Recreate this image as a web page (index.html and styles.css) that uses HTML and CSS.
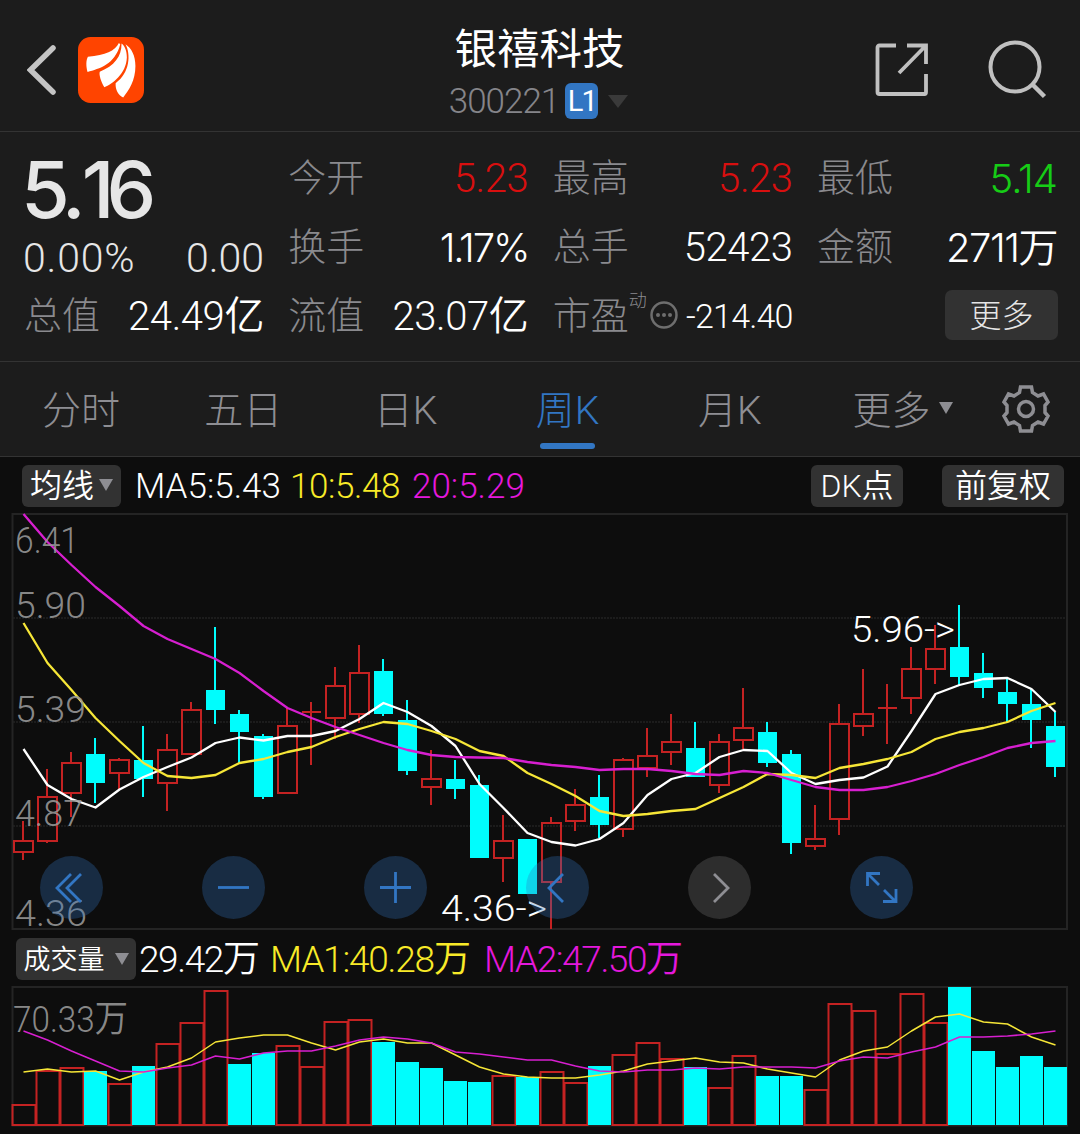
FILE: index.html
```html
<!DOCTYPE html>
<html lang="zh-CN">
<head>
    <meta charset="UTF-8">
    <meta name="viewport" content="width=device-width, initial-scale=1.0">
    <title>银禧科技 300221</title>
    <link rel="stylesheet" href="styles.css">
</head>
<body>
    <header class="header">
        <div class="header-left">
            <svg class="back" viewBox="0 0 30 50" width="30" height="50"><path d="M26 3 L3.5 25 L26 47"/></svg>
            <svg class="logo" viewBox="0 0 200 200" width="66" height="66">
                <rect width="200" height="200" rx="38"/>
                <path d="M124 18 C112 42 84 55 30 60 C24 70 24 90 29 106 C64 96 112 84 128 22 Z"/>
                <path d="M132 20 C132 60 110 88 66 105 C63 114 70 136 80 152 C104 142 146 112 148 62 C148 42 142 28 132 20 Z"/>
                <path d="M144 22 C160 52 158 108 114 140 C113 160 122 176 137 183 C154 162 174 132 174 88 C174 56 162 34 144 22 Z"/>
            </svg>
        </div>
        <div class="header-title">
            <h1 class="stock-name">银禧科技</h1>
            <div class="stock-code">
                <span class="code">300221</span>
                <span class="level">L1</span>
                <span class="caret caret-dark"></span>
            </div>
        </div>
        <div class="header-right">
            <svg viewBox="0 0 54 54" width="54" height="54">
                <path d="M21 2.5 H4.5 Q2.5 2.5 2.5 4.5 V49 Q2.5 51 4.5 51 H49.5 Q51 51 51 49 V31 M32 2.5 H51 V21 M50 3.5 L24 30"/>
            </svg>
            <svg viewBox="0 0 60 60" width="60" height="60">
                <circle cx="27" cy="27" r="24.5" stroke-width="4"/>
                <path d="M44 44 L56.5 56.5" stroke-width="4.5"/>
            </svg>
        </div>
    </header>

    <section class="quote">
        <div class="quote-col">
            <div class="price">5<span class="dot-gap">.</span>16</div>
            <div class="quote-row change"><span class="percent">0.00%</span><span>0.00</span></div>
            <div class="quote-row"><span class="label">总值</span><span class="value">24.49亿</span></div>
        </div>
        <div class="quote-col">
            <div class="quote-row"><span class="label">今开</span><span class="value red">5.23</span></div>
            <div class="quote-row"><span class="label">换手</span><span class="value narrow">1.17%</span></div>
            <div class="quote-row"><span class="label">流值</span><span class="value">23.07亿</span></div>
        </div>
        <div class="quote-col">
            <div class="quote-row"><span class="label">最高</span><span class="value red">5.23</span></div>
            <div class="quote-row"><span class="label">总手</span><span class="value">52423</span></div>
            <div class="quote-row">
                <span class="label">市盈<sup class="dynamic">动</sup></span>
                <svg class="info" viewBox="0 0 28 28" width="28" height="28">
                    <circle cx="14" cy="14" r="12.5"/>
                    <circle class="dot" cx="8" cy="14" r="2"/><circle class="dot" cx="14" cy="14" r="2"/><circle class="dot" cx="20" cy="14" r="2"/>
                </svg>
                <span class="value small">-214.40</span>
            </div>
        </div>
        <div class="quote-col">
            <div class="quote-row"><span class="label">最低</span><span class="value narrow green">5.14</span></div>
            <div class="quote-row"><span class="label">金额</span><span class="value narrow wan">2711万</span></div>
            <div class="quote-row more-row"><span class="more">更多</span></div>
        </div>
    </section>

    <nav class="tabs">
        <a class="tab">分时</a>
        <a class="tab">五日</a>
        <a class="tab">日K</a>
        <a class="tab active">周K</a>
        <a class="tab">月K</a>
        <a class="tab tab-more">更多<span class="caret"></span></a>
        <a class="tab-gear">
            <svg viewBox="-25 -25 50 50" width="50" height="50">
                <path d="M-5.5 -22 H5.5 L6.5 -16.5 L12 -13 L17.5 -15 L22 -7 L19 -3.5 V3.5 L22 7 L17.5 15 L12 13 L6.5 16.5 L5.5 22 H-5.5 L-6.5 16.5 L-12 13 L-17.5 15 L-22 7 L-19 3.5 V-3.5 L-22 -7 L-17.5 -15 L-12 -13 L-6.5 -16.5 Z"/>
                <circle r="7.5"/>
            </svg>
        </a>
    </nav>

    <main class="charts">
        <div class="legend">
            <span class="chip chip-ma">均线<span class="caret"></span></span>
            <span class="ma5">MA5:5.43</span>
            <span class="ma10">10:5.48</span>
            <span class="ma20">20:5.29</span>
            <span class="chip chip-dk">DK点</span>
            <span class="chip chip-adj">前复权</span>
        </div>
        <div class="kline">
            <svg id="kline" viewBox="0 512 1080 420" width="1080" height="420"></svg>
            <div class="controls">
                <span class="ctrl"><svg viewBox="0 0 63 63"><path d="M31 18 L17 32 L31 46 M41 18 L27 32 L41 46"/></svg></span>
                <span class="ctrl"><svg viewBox="0 0 63 63"><path d="M16 31.5 H47"/></svg></span>
                <span class="ctrl"><svg viewBox="0 0 63 63"><path d="M16 31.5 H47 M31.5 16 V47"/></svg></span>
                <span class="ctrl"><svg viewBox="0 0 63 63"><path d="M37 18 L23 32 L37 46"/></svg></span>
                <span class="ctrl disabled"><svg viewBox="0 0 63 63"><path d="M26 18 L40 32 L26 46"/></svg></span>
                <span class="ctrl"><svg viewBox="0 0 63 63"><path d="M17.5 30 V17.5 H30 M18 18 L29 29 M46 33 V45.5 H33 M45 45 L34 34"/></svg></span>
            </div>
        </div>
        <div class="legend legend-vol">
            <span class="chip chip-vol">成交量<span class="caret"></span></span>
            <span class="vol">29.42万</span>
            <span class="ma10 vol-ma1">MA1:40.28万</span>
            <span class="ma20 vol-ma2">MA2:47.50万</span>
        </div>
        <svg id="volume" viewBox="0 986 1080 148" width="1080" height="148"></svg>
    </main>

    <script src="chart.js"></script>
</body>
</html>
```
FILE: styles.css
```css
* {
    margin: 0;
    padding: 0;
    box-sizing: border-box;
}

body {
    width: 1080px;
    height: 1134px;
    overflow: hidden;
    background: #0d0d0d;
    color: #fff;
    font-family: Roboto, "Noto Sans CJK SC", sans-serif;
    font-weight: 300;
    line-height: 1.2;
    white-space: nowrap;
}

svg {
    display: block;
    flex-shrink: 0;
    fill: none;
}

/* header */
.header {
    display: grid;
    grid-template-columns: 1fr 300px 1fr;
    height: 132px;
    padding: 0 32px 0 27px;
    background: #1c1c1c;
    border-bottom: 1px solid #333;
}

.header-left {
    display: flex;
    align-items: center;
    gap: 21px;
    padding-top: 8px;
}

.back {
    stroke: #c4c4c4;
    stroke-width: 5.5;
    stroke-linecap: round;
}

.logo rect {
    fill: #ff4400;
}

.logo path {
    fill: #fff;
}

.header-title {
    display: flex;
    flex-direction: column;
    align-items: center;
    padding-top: 20px;
}

.stock-name {
    padding-left: 4px;
    font-size: 42.5px;
    font-weight: 400;
    line-height: 60px;
}

.stock-code {
    display: flex;
    align-items: center;
    height: 42px;
    gap: 8px;
    padding-left: 2px;
    color: #85858a;
    font-size: 35px;
}

.code {
    padding-top: 2px;
    margin-right: -2px;
    letter-spacing: -1px;
}

.level {
    width: 33px;
    height: 36px;
    border-radius: 6px;
    background: #3276c3;
    color: #fff;
    font-size: 29px;
    font-weight: 400;
    line-height: 37px;
    letter-spacing: -2px;
    text-align: center;
}

.caret {
    display: inline-block;
    border: 7px solid transparent;
    border-top: 12px solid #8e8e93;
    border-bottom: 0;
}

.caret-dark {
    margin-left: 2px;
    border-width: 13px 10px 0;
    border-top-color: #3a3a3a;
}

.header-right {
    display: flex;
    align-items: center;
    justify-content: flex-end;
    gap: 59px;
    padding-top: 8px;
    stroke: #c0c0c0;
    stroke-width: 3.8;
}

/* quote */
.quote {
    display: flex;
    justify-content: space-between;
    height: 230px;
    padding: 12px 23px 0 24px;
    background: #1c1c1c;
    border-bottom: 1px solid #333;
}

.quote-col {
    width: 240px;
}

.quote-row {
    display: flex;
    align-items: center;
    justify-content: space-between;
    height: 69px;
}

.price {
    height: 86px;
    margin-left: -3px;
    color: #e6e6e6;
    font-family: Inter, sans-serif;
    font-size: 79px;
    font-weight: 500;
    line-height: 90px;
    letter-spacing: -8px;
}

.dot-gap {
    letter-spacing: -4px;
}

.change {
    height: 52px;
    margin-left: -1px;
    padding-top: 6px;
    color: #e6e6e6;
    font-size: 41px;
}

.percent {
    letter-spacing: 0.8px;
}

.label {
    position: relative;
    color: #8a8a8e;
    font-size: 38px;
}

.value {
    font-size: 40px;
    font-weight: 350;
    letter-spacing: -0.4px;
}

.narrow {
    font-family: Inter, "Noto Sans CJK SC", sans-serif;
    font-feature-settings: "calt" 0;
    letter-spacing: -2.1px;
}

.wan {
    letter-spacing: -1.5px;
}

.small {
    font-size: 34px;
    letter-spacing: -0.8px;
}

.red {
    color: #d80f0f;
}

.green {
    color: #16cc16;
    letter-spacing: -1px;
}

.dynamic {
    position: absolute;
    left: 76px;
    top: -7px;
    font-size: 18px;
    line-height: 1.5;
}

.info {
    margin: -4px -14px 0 0;
    stroke: #6e6e6e;
    stroke-width: 2.5;
}

.info .dot {
    fill: #6e6e6e;
    stroke: none;
}

.more-row {
    justify-content: flex-end;
}

.more {
    width: 113px;
    height: 50px;
    margin: -3px -1px 0 0;
    border-radius: 7px;
    background: #323232;
    color: #e6e6e6;
    font-size: 32px;
    line-height: 52px;
    text-align: center;
}

/* tabs */
.tabs {
    display: flex;
    height: 95px;
    background: #1c1c1c;
    border-bottom: 1px solid #333;
    color: #8e8e93;
    font-size: 39px;
}

.tab {
    display: flex;
    align-items: center;
    justify-content: center;
    width: 162.2px;
    padding-top: 5px;
}

.active {
    flex-direction: column;
    justify-content: flex-end;
    color: #3276c3;
}

.active::after {
    content: "";
    width: 55px;
    height: 6px;
    margin: 8px 0 7px;
    border-radius: 3px;
    background: #3276c3;
}

.tab-more {
    width: 181px;
    gap: 8px;
}

.tab-more .caret {
    margin: -7px -3px 0 1px;
}

.tab-gear {
    display: flex;
    align-items: center;
    justify-content: center;
    width: 68px;
    stroke: #8e8e93;
    stroke-width: 3.5;
}

/* charts */
.legend {
    display: flex;
    align-items: center;
    height: 55px;
    padding: 2px 16px 0 22px;
    font-size: 35px;
    font-weight: 350;
}

.chip {
    display: flex;
    align-items: center;
    justify-content: center;
    height: 42px;
    padding-top: 2px;
    border-radius: 6px;
    background: #323232;
    font-size: 32px;
}

.chip-ma {
    width: 99px;
    gap: 5px;
    margin-right: 14px;
}

.chip .caret {
    margin-top: -3px;
}

.ma5 {
    width: 155px;
    padding-top: 2px;
}

.ma10 {
    width: 122px;
    padding-top: 2px;
    color: #f8ea28;
    letter-spacing: -0.4px;
}

.ma20 {
    padding-top: 2px;
    color: #e418dc;
}

.chip-dk {
    width: 92px;
    margin-left: auto;
}

.chip-adj {
    width: 122px;
    margin-left: 39px;
}

.kline {
    position: relative;
    height: 420px;
}

.controls {
    position: absolute;
    left: 40px;
    top: 344px;
    display: flex;
    gap: 99px;
}

.ctrl {
    width: 63px;
    height: 63px;
    border-radius: 50%;
    background: rgba(51, 117, 191, 0.3);
    stroke: #3276c3;
    stroke-width: 2.8;
}

.disabled {
    background: rgba(120, 120, 120, 0.3);
    stroke: #8e8e93;
}

.legend-vol {
    height: 54px;
    padding: 0 0 0 16px;
    font-size: 37px;
    letter-spacing: -1.4px;
}

.chip-vol {
    width: 120px;
    gap: 10px;
    margin-right: 3px;
    font-size: 27px;
    letter-spacing: 0;
}

.vol {
    width: 131px;
    padding-top: 2px;
}

.vol-ma1 {
    width: 214px;
    letter-spacing: -1.2px;
}

/* svg chart parts */
.frame {
    stroke: #242424;
    stroke-width: 2;
}

.gridline {
    stroke: #222;
    stroke-width: 1.5;
    stroke-dasharray: 2 1;
}

.rise {
    stroke: #c42222;
    stroke-width: 2;
}

.fall {
    fill: #00fdfd;
}

.line {
    stroke-width: 2.3;
    stroke-linejoin: round;
}

.line-thin {
    stroke-width: 1.5;
}

.white {
    stroke: #fff;
}

.yellow {
    stroke: #f6e637;
}

.magenta {
    stroke: #d71fd0;
}

.axis {
    fill: #999;
    fill-opacity: 0.9;
    font-size: 37px;
    font-weight: 350;
}

.mark {
    fill: #fff;
    font-size: 37px;
    font-weight: 350;
}
```
FILE: chart.js
```js
const STEP = 24;
const FIRST = 23;

// high, open/close top, open/close bottom, low, direction (r = rise, f = fall)
const candles = [
    [821, 840, 853, 860, 'r'], [769, 796, 842, 843, 'r'], [752, 762, 794, 817, 'r'], [738, 754, 783, 803, 'f'],
    [758, 759, 774, 789, 'r'], [726, 760, 779, 797, 'f'], [734, 749, 784, 811, 'r'], [702, 709, 755, 755, 'r'],
    [627, 690, 710, 724, 'f'], [710, 714, 732, 763, 'f'], [734, 736, 797, 799, 'f'], [707, 725, 794, 794, 'r'],
    [702, 711, 713, 765, 'r'], [667, 685, 719, 739, 'r'], [645, 672, 715, 723, 'r'], [659, 671, 714, 716, 'f'],
    [700, 720, 771, 775, 'f'], [750, 778, 788, 805, 'r'], [760, 779, 789, 799, 'f'], [775, 785, 858, 858, 'f'],
    [815, 840, 859, 882, 'r'], [839, 839, 894, 894, 'f'], [817, 822, 883, 929, 'r'], [789, 804, 822, 831, 'r'],
    [775, 797, 825, 838, 'f'], [758, 759, 830, 837, 'r'], [728, 755, 769, 777, 'r'], [714, 741, 753, 765, 'r'],
    [722, 748, 777, 777, 'f'], [734, 741, 786, 793, 'r'], [688, 727, 741, 749, 'r'], [722, 732, 763, 767, 'f'],
    [750, 754, 843, 854, 'f'], [805, 838, 847, 850, 'r'], [704, 723, 820, 835, 'r'], [669, 713, 727, 736, 'r'],
    [684, 707, 709, 744, 'r'], [647, 668, 699, 714, 'r'], [625, 648, 670, 684, 'r'], [605, 647, 677, 685, 'f'],
    [653, 673, 688, 698, 'f'], [679, 692, 704, 722, 'f'], [689, 704, 720, 748, 'f'], [712, 726, 767, 777, 'f']
];

const ma5 = [749, 785, 799, 807.5, 789.5, 777, 767, 757.5, 743, 737.5, 740.5, 736, 736, 731, 719, 703, 712, 726, 746, 784, 808, 833,
    842, 845.5, 839, 823, 795, 779, 773, 757, 750, 751, 773, 784, 780, 777.5, 766.5, 731, 694, 685, 679, 678, 689, 712];
const ma10 = [623, 663, 690, 718, 741, 763, 776, 778, 775, 763, 759, 752, 747, 737, 729, 722, 724, 731, 739, 751, 756, 773,
    784, 796, 811, 816, 814, 811, 809, 798, 787, 774, 775, 778, 768, 764, 759, 752, 739, 732, 728, 722, 711, 703];
const ma20 = [514, 542, 565, 587, 606, 626, 639, 649, 659, 673, 691, 708, 718, 727, 735, 743, 750, 755, 757, 757.5, 758, 762,
    765, 767, 770, 769, 769, 771, 774, 775, 771, 773, 780, 787, 790, 790, 787, 781, 774, 765, 757, 748, 743, 741];

const volumes = [1104, 1070, 1067, 1071, 1083, 1066, 1043, 1022, 990, 1064, 1053, 1045, 1066, 1021, 1019, 1042, 1062, 1068, 1081, 1082, 1075, 1077,
    1071, 1082, 1066, 1054, 1042, 1058, 1067, 1087, 1055, 1076, 1076, 1089, 1003, 1010, 1053, 993, 1022, 987, 1051, 1067, 1056, 1067];
const volumeDir = 'rrrfrfrrrffrrrrfffffrfrrfrrrfrrffrrrrrrfffff';
const volMa1 = [1072, 1069, 1072, 1071, 1080, 1072, 1067, 1058, 1042, 1038, 1035, 1035, 1043, 1050, 1042, 1039, 1043, 1043, 1055, 1067, 1074, 1077,
    1078, 1078, 1075, 1071, 1064, 1061, 1058, 1062, 1063, 1069, 1073, 1077, 1060, 1051, 1047, 1031, 1017, 1014, 1022, 1024, 1037, 1045];
const volMa2 = [1031, 1040, 1051, 1061, 1071, 1072, 1068, 1065, 1056, 1059, 1053, 1051, 1051, 1046, 1040, 1037, 1039, 1043, 1052, 1054, 1057, 1060,
    1060, 1066, 1071, 1072, 1070, 1070, 1068, 1069, 1067, 1067, 1067, 1068, 1061, 1057, 1058, 1052, 1047, 1037, 1037, 1036, 1034, 1031];

function polyline(values, cls) {
    const points = values.map((y, i) => (FIRST + i * STEP + 0.5) + ',' + y).join(' ');
    return `<polyline class="line ${cls}" points="${points}"/>`;
}

function candle([high, top, bottom, low, dir], i) {
    const x = FIRST + i * STEP;
    if (dir === 'f') {
        return `<rect class="fall" x="${x - 1}" y="${high}" width="2" height="${low - high}"/>` +
            `<rect class="fall" x="${x - 9}" y="${top}" width="19" height="${bottom - top}"/>`;
    }
    if (bottom - top < 3) {
        return `<path class="rise" d="M${x} ${high}V${low}M${x - 9} ${top + 1}H${x + 10}"/>`;
    }
    return `<path class="rise" d="M${x} ${high}V${top}M${x} ${bottom}V${low}"/>` +
        `<rect class="rise" x="${x - 9}" y="${top + 1}" width="19" height="${bottom - top - 2}"/>`;
}

function volumeBar(top, i) {
    const x = 12 + i * STEP;
    if (volumeDir[i] === 'f') {
        return `<rect class="fall" x="${x}" y="${top}" width="23" height="${1125 - top}"/>`;
    }
    return `<rect class="rise" x="${x + 0.5}" y="${top + 1}" width="23" height="${1124 - top}"/>`;
}

function text(x, y, length, value, cls) {
    return `<text class="${cls}" x="${x}" y="${y}" textLength="${length}" lengthAdjust="spacingAndGlyphs">${value}</text>`;
}

document.getElementById('kline').innerHTML =
    '<rect class="frame" x="12.5" y="514" width="1054.5" height="415"/>' +
    [618, 722, 826].map(y => `<path class="gridline" d="M13 ${y}H1066"/>`).join('') +
    candles.map(candle).join('') +
    polyline(ma5, 'white') + polyline(ma10, 'yellow') + polyline(ma20, 'magenta') +
    text(15, 553, 64, '6.41', 'axis') +
    text(15, 618, 71, '5.90', 'axis') +
    text(15, 722, 71, '5.39', 'axis') +
    text(15, 826, 68, '4.87', 'axis') +
    text(15, 926, 72, '4.36', 'axis') +
    text(851, 642, 104, '5.96-&gt;', 'mark') +
    text(441, 921, 106, '4.36-&gt;', 'mark');

document.getElementById('volume').innerHTML =
    '<rect class="frame" x="12.5" y="987" width="1054.5" height="138.5"/>' +
    volumes.map(volumeBar).join('') +
    polyline(volMa1, 'yellow line-thin') + polyline(volMa2, 'magenta line-thin') +
    text(13, 1032, 115, '70.33万', 'axis');
```
